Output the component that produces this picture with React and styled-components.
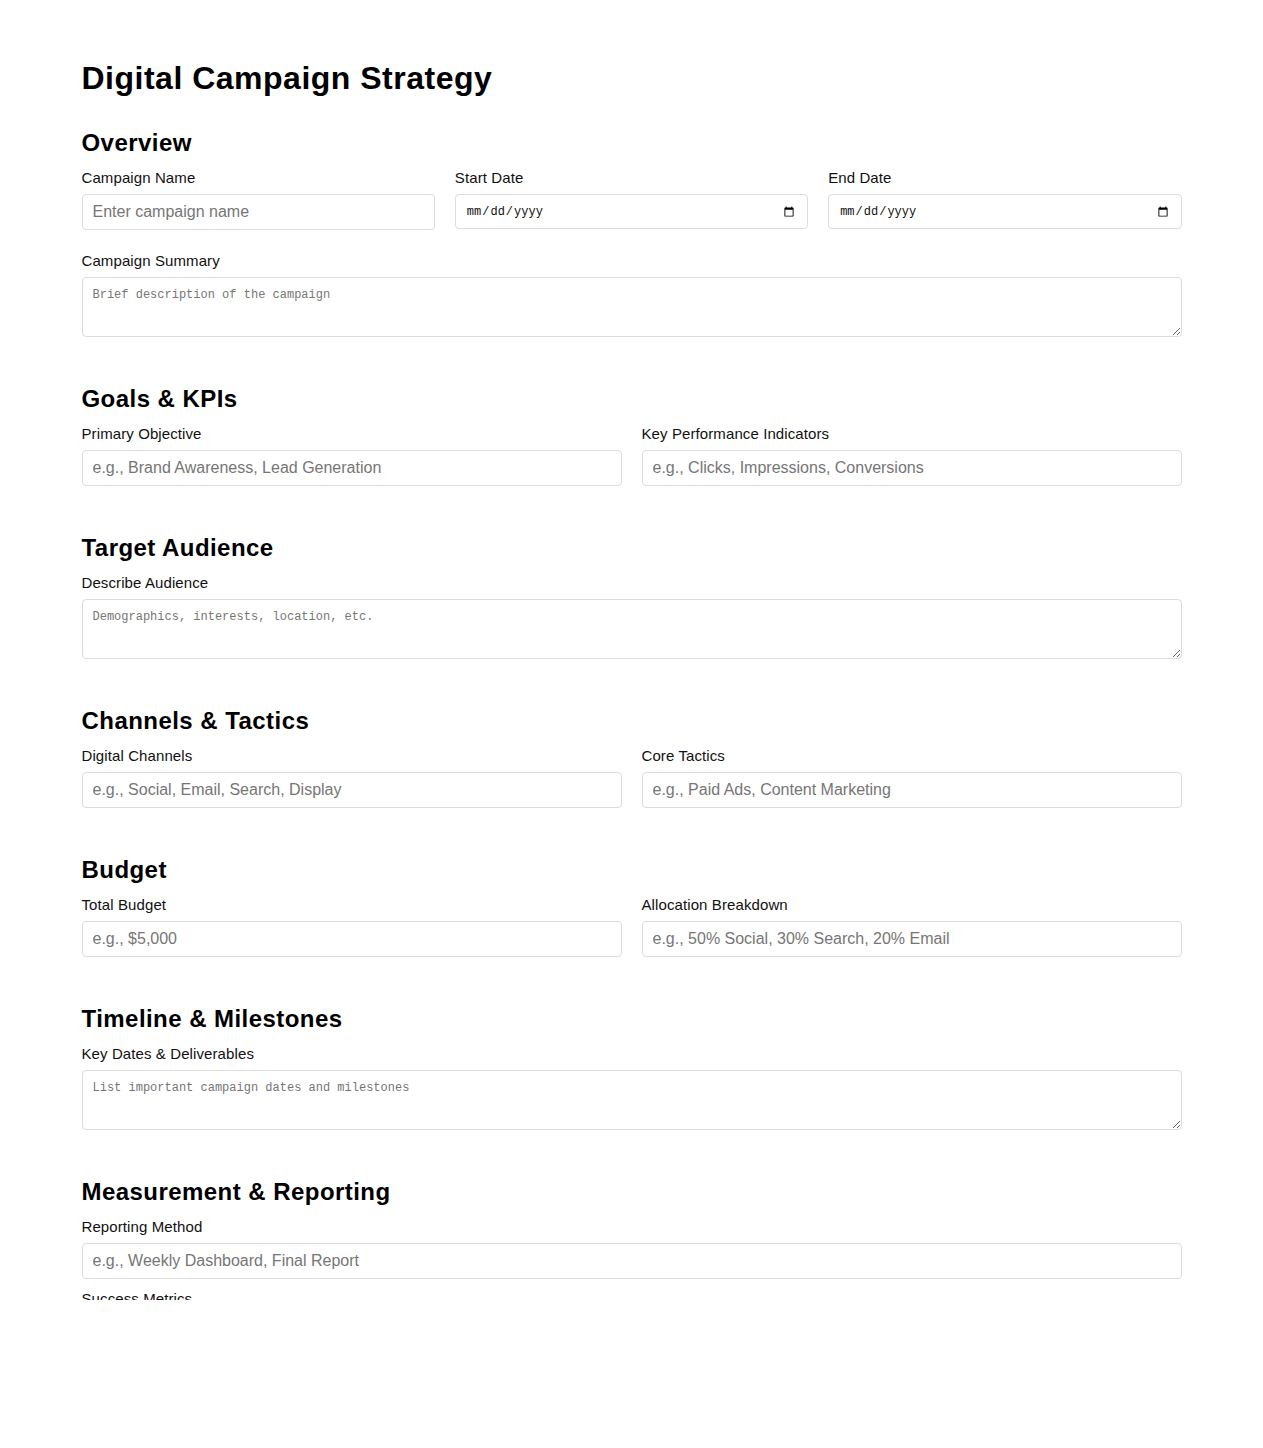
import React from 'react';
import styled, { createGlobalStyle } from 'styled-components';

const GlobalStyle = createGlobalStyle`
    * {
        box-sizing: border-box;
    }
    body {
        margin: 0;
        background: #ffffff;
        font-family: "Liberation Sans", Arial, sans-serif;
        color: #111;
    }
`;

const Page = styled.div`
    height: 1300px;
    overflow: hidden;
    padding-top: 60px;
`;

const Sheet = styled.div`
    width: 1100px;
    margin: 0 auto;
`;

const Title = styled.h1`
    margin: 0 0 32px;
    font-size: 32px;
    line-height: 37px;
    font-weight: 700;
    letter-spacing: 0.5px;
    color: #000;
`;

const Section = styled.section`
    display: flow-root;
    padding-bottom: 26px;
`;

const SectionTitle = styled.h2`
    margin: 0 0 12px;
    font-size: 24px;
    line-height: 28px;
    font-weight: 700;
    letter-spacing: 0.45px;
    color: #000;
`;

const Row = styled.div`
    display: grid;
    grid-template-columns: repeat(${(p) => p.$cols || 1}, 1fr);
    column-gap: 20px;
    margin-bottom: ${(p) => (p.$tight ? '11px' : '22px')};
`;

const Field = styled.div`
    display: flex;
    flex-direction: column;
    min-width: 0;
`;

const Label = styled.label`
    display: block;
    margin-bottom: 8px;
    font-size: 15px;
    line-height: 17px;
    letter-spacing: 0.1px;
    color: #111;
`;

const TextInput = styled.input`
    width: 100%;
    height: 36px;
    padding: 0 10px;
    border: 1px solid #dcdcdc;
    border-radius: 4px;
    font-family: "Liberation Sans", Arial, sans-serif;
    font-size: 16px;
    color: #111;
    background: #fff;
    outline: none;

    &::placeholder {
        color: #767676;
    }
`;

const DateInput = styled(TextInput).attrs({ type: 'date' })`
    font-family: "Liberation Mono", "DejaVu Sans Mono", monospace;
    font-size: 12px;
    height: 35px;
    padding: 0 10px;
`;

const TextArea = styled.textarea`
    display: block;
    width: 100%;
    height: 60px;
    padding: 10px;
    border: 1px solid #dcdcdc;
    border-radius: 4px;
    font-family: "Liberation Mono", "DejaVu Sans Mono", monospace;
    font-size: 12px;
    line-height: 14px;
    color: #111;
    background: #fff;
    outline: none;

    &::placeholder {
        color: #767676;
    }
`;

const sections = [
    {
        title: 'Goals & KPIs',
        rows: [
            {
                cols: 2,
                fields: [
                    { label: 'Primary Objective', placeholder: 'e.g., Brand Awareness, Lead Generation' },
                    { label: 'Key Performance Indicators', placeholder: 'e.g., Clicks, Impressions, Conversions' },
                ],
            },
        ],
    },
    {
        title: 'Target Audience',
        rows: [
            { cols: 1, fields: [{ label: 'Describe Audience', placeholder: 'Demographics, interests, location, etc.', area: true }] },
        ],
    },
    {
        title: 'Channels & Tactics',
        rows: [
            {
                cols: 2,
                fields: [
                    { label: 'Digital Channels', placeholder: 'e.g., Social, Email, Search, Display' },
                    { label: 'Core Tactics', placeholder: 'e.g., Paid Ads, Content Marketing' },
                ],
            },
        ],
    },
    {
        title: 'Budget',
        rows: [
            {
                cols: 2,
                fields: [
                    { label: 'Total Budget', placeholder: 'e.g., $5,000' },
                    { label: 'Allocation Breakdown', placeholder: 'e.g., 50% Social, 30% Search, 20% Email' },
                ],
            },
        ],
    },
    {
        title: 'Timeline & Milestones',
        rows: [
            { cols: 1, fields: [{ label: 'Key Dates & Deliverables', placeholder: 'List important campaign dates and milestones', area: true }] },
        ],
    },
    {
        title: 'Measurement & Reporting',
        rows: [
            { cols: 1, tight: true, fields: [{ label: 'Reporting Method', placeholder: 'e.g., Weekly Dashboard, Final Report' }] },
            { cols: 1, fields: [{ label: 'Success Metrics', placeholder: 'e.g., ROI, Cost per Acquisition' }] },
        ],
    },
];

const FormField = ({ label, placeholder, area }) => (
    <Field>
        <Label>{label}</Label>
        {area ? <TextArea placeholder={placeholder} /> : <TextInput type="text" placeholder={placeholder} />}
    </Field>
);

export default function App() {
    return (
        <>
            <GlobalStyle />
            <Page>
                <Sheet>
                    <Title>Digital Campaign Strategy</Title>

                    <Section>
                        <SectionTitle>Overview</SectionTitle>
                        <Row $cols={3}>
                            <FormField label="Campaign Name" placeholder="Enter campaign name" />
                            <Field>
                                <Label>Start Date</Label>
                                <DateInput />
                            </Field>
                            <Field>
                                <Label>End Date</Label>
                                <DateInput />
                            </Field>
                        </Row>
                        <Row>
                            <FormField label="Campaign Summary" placeholder="Brief description of the campaign" area />
                        </Row>
                    </Section>

                    {sections.map((s) => (
                        <Section key={s.title}>
                            <SectionTitle>{s.title}</SectionTitle>
                            {s.rows.map((r, i) => (
                                <Row key={i} $cols={r.cols} $tight={r.tight}>
                                    {r.fields.map((f) => (
                                        <FormField key={f.label} {...f} />
                                    ))}
                                </Row>
                            ))}
                        </Section>
                    ))}
                </Sheet>
            </Page>
        </>
    );
}
